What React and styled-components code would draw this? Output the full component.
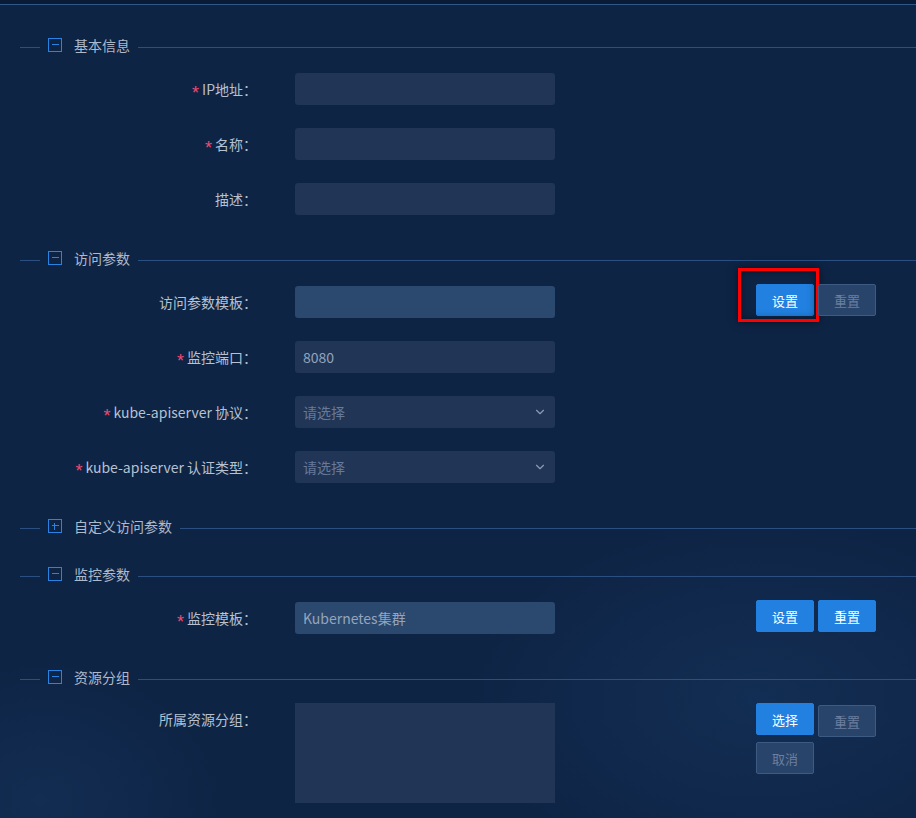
import React from "react";
import styled, { createGlobalStyle } from "styled-components";
import { ChevronDown } from "lucide-react";

const GlobalStyle = createGlobalStyle`
  html, body {
    margin: 0;
    padding: 0;
    background: #0e2445;
  }
  * {
    box-sizing: border-box;
  }
`;

const Page = styled.div`
  height: 818px;
  font-family: "Noto Sans CJK SC", "Liberation Sans", sans-serif;
  font-size: 14px;
  color: #b6c1d1;
  background:
    radial-gradient(ellipse 420px 260px at 760px 700px, rgba(40, 90, 150, 0.18), transparent 70%),
    radial-gradient(ellipse 260px 200px at 40px 800px, rgba(40, 90, 150, 0.16), transparent 70%),
    #0e2445;
  overflow: hidden;
`;

const TopStrip = styled.div`
  height: 5px;
  background: #0a1b37;
  border-bottom: 1px solid #2d5888;
`;

const Form = styled.div`
  padding: 33px 0 0 20px;
`;

const Section = styled.section`
  margin-bottom: ${(p) => (p.$collapsed ? 34 : 36)}px;
`;

const Header = styled.div`
  display: flex;
  align-items: center;
  height: 14px;
  margin-bottom: ${(p) => p.$space}px;
`;

const Rule = styled.span`
  height: 1px;
  margin-top: 4px;
  background: #2b4f80;
  flex: ${(p) => (p.$grow ? 1 : "0 0 20px")};
`;

const Toggle = styled.span`
  position: relative;
  width: 14px;
  height: 14px;
  margin: 0 12px 0 8px;
  border: 1.5px solid #2a82e2;
  flex: none;

  &::before,
  &::after {
    content: "";
    position: absolute;
    background: #2a82e2;
  }
  &::before {
    left: 2.5px;
    right: 2.5px;
    top: 4.75px;
    height: 1.5px;
  }
  &::after {
    display: ${(p) => (p.$plus ? "block" : "none")};
    top: 2.5px;
    bottom: 2.5px;
    left: 4.75px;
    width: 1.5px;
  }
`;

const Title = styled.span`
  color: #aeb9ca;
  line-height: 20px;
  margin-right: 8px;
  white-space: nowrap;
`;

const Body = styled.div`
  display: flex;
  flex-direction: column;
  gap: 23px;
`;

const Row = styled.div`
  display: flex;
  align-items: flex-start;
`;

const Label = styled.label`
  display: block;
  width: 275px;
  height: 32px;
  padding-right: 38px;
  text-align: right;
  line-height: 32px;
  color: #b6c1d1;
  white-space: nowrap;
`;

const Star = styled.span`
  display: inline-block;
  font-family: "Liberation Sans", sans-serif;
  font-size: 18px;
  line-height: 1;
  color: #ef4a70;
  margin-right: 3px;
  transform: translateY(4px);
`;

const Field = styled.div`
  position: relative;
  width: 260px;
  height: ${(p) => p.$h || 32}px;
  padding: 0 8px;
  border-radius: ${(p) => (p.$h ? 0 : 3)}px;
  background: ${(p) => (p.$light ? "#2b486e" : "#213556")};
  display: flex;
  align-items: center;
  justify-content: space-between;
  color: ${(p) => (p.$muted ? "#66799a" : "#93a4bd")};
  flex: none;
`;

const Caret = styled(ChevronDown)`
  color: #8b9bb4;
  flex: none;
`;

const Buttons = styled.div`
  margin-left: 201px;
  margin-top: ${(p) => p.$offset || 0}px;
  display: grid;
  grid-template-columns: 58px 58px;
  column-gap: 4px;
  row-gap: 5px;
  align-items: start;
`;

const Button = styled.button`
  position: relative;
  width: 58px;
  height: 32px;
  margin-top: ${(p) => p.$nudge || 0}px;
  padding: 0;
  border-radius: 2px;
  font-family: inherit;
  font-size: 13px;
  border: 1px solid ${(p) => (p.disabled ? "#3c5a82" : "#2180e0")};
  background: ${(p) => (p.disabled ? "#29446a" : "#2180e0")};
  color: ${(p) => (p.disabled ? "#6b7f9f" : "#ffffff")};
  cursor: ${(p) => (p.disabled ? "default" : "pointer")};
`;

const Highlight = styled.span`
  position: absolute;
  left: -19px;
  top: -17px;
  right: -6px;
  bottom: -7px;
  border: 3px solid #ff0000;
  box-shadow: 0 0 8px rgba(0, 0, 0, 0.55), inset 0 0 8px rgba(0, 0, 0, 0.45);
  pointer-events: none;
`;

const SectionHeader = ({ title, collapsed, space = 21 }) => (
  <Header $space={collapsed ? 0 : space}>
    <Rule />
    <Toggle $plus={collapsed} />
    <Title>{title}</Title>
    <Rule $grow />
  </Header>
);

const FormLabel = ({ required, children }) => (
  <Label>
    {required && <Star>*</Star>}
    {children}
  </Label>
);

const App = () => (
  <Page>
    <GlobalStyle />
    <TopStrip />
    <Form>
      <Section>
        <SectionHeader title="基本信息" />
        <Body>
          <Row>
            <FormLabel required>IP地址：</FormLabel>
            <Field />
          </Row>
          <Row>
            <FormLabel required>名称：</FormLabel>
            <Field />
          </Row>
          <Row>
            <FormLabel>描述：</FormLabel>
            <Field />
          </Row>
        </Body>
      </Section>

      <Section>
        <SectionHeader title="访问参数" />
        <Body>
          <Row>
            <FormLabel>访问参数模板：</FormLabel>
            <Field $light />
            <Buttons $offset={-2}>
              <Button>
                设置
                <Highlight />
              </Button>
              <Button disabled>重置</Button>
            </Buttons>
          </Row>
          <Row>
            <FormLabel required>监控端口：</FormLabel>
            <Field>8080</Field>
          </Row>
          <Row>
            <FormLabel required>kube-apiserver 协议：</FormLabel>
            <Field $muted>
              请选择
              <Caret size={14} strokeWidth={2} />
            </Field>
          </Row>
          <Row>
            <FormLabel required>kube-apiserver 认证类型：</FormLabel>
            <Field $muted>
              请选择
              <Caret size={14} strokeWidth={2} />
            </Field>
          </Row>
        </Body>
      </Section>

      <Section $collapsed>
        <SectionHeader title="自定义访问参数" collapsed />
      </Section>

      <Section>
        <SectionHeader title="监控参数" />
        <Body>
          <Row>
            <FormLabel required>监控模板：</FormLabel>
            <Field $light>Kubernetes集群</Field>
            <Buttons $offset={-2}>
              <Button>设置</Button>
              <Button>重置</Button>
            </Buttons>
          </Row>
        </Body>
      </Section>

      <Section>
        <SectionHeader title="资源分组" space={19} />
        <Body>
          <Row>
            <FormLabel>所属资源分组：</FormLabel>
            <Field $h={100} />
            <Buttons>
              <Button>选择</Button>
              <Button disabled $nudge={2}>
                重置
              </Button>
              <Button disabled>取消</Button>
            </Buttons>
          </Row>
        </Body>
      </Section>
    </Form>
  </Page>
);

export default App;
